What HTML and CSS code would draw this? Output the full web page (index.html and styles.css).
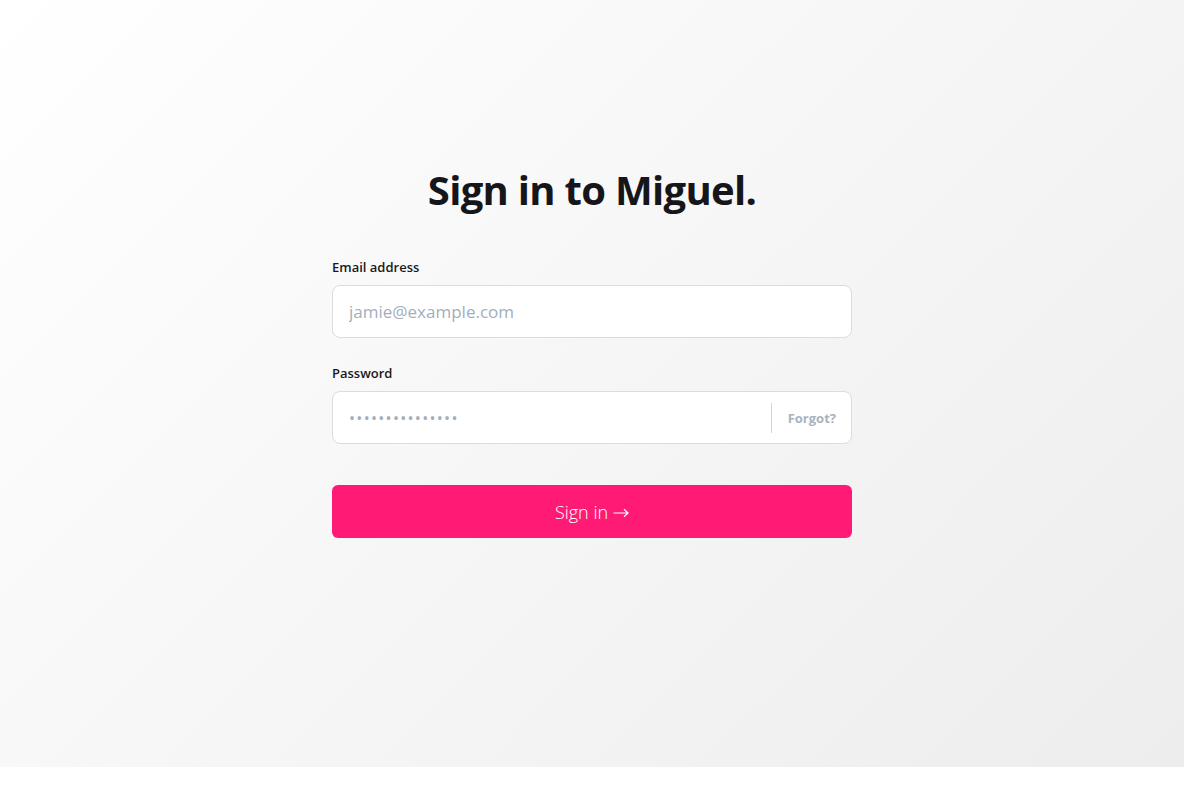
FILE: index.html
```html
<!DOCTYPE html>
<html lang="en">
<head>
<meta charset="utf-8">
<title>Sign in to Miguel.</title>
<link rel="stylesheet" href="styles.css">
</head>
<body>
<main class="page">
  <div class="card">
    <h1 class="title">Sign in to Miguel.</h1>
    <form class="form">
      <div class="field">
        <label class="label" for="email">Email address</label>
        <div class="input-wrap">
          <input class="input" id="email" type="email" placeholder="jamie@example.com">
        </div>
      </div>
      <div class="field">
        <label class="label" for="password">Password</label>
        <div class="input-wrap">
          <input class="input input-pass" id="password" type="password" placeholder="•••••••••••••••">
          <span class="divider"></span>
          <a class="forgot" href="#">Forgot?</a>
        </div>
      </div>
      <button class="submit" type="button">Sign in <svg class="arrow" width="16" height="10" viewBox="0 0 16 10" aria-hidden="true"><path d="M0.5 5H15M11 1.2L15 5L11 8.8" fill="none" stroke="#fff" stroke-width="1.2"/></svg></button>
    </form>
  </div>
</main>
</body>
</html>
```
FILE: styles.css
```css
* { box-sizing: border-box; }
html, body { margin: 0; padding: 0; background: #fff; }
body { font-family: "Open Sans", "Noto Sans", sans-serif; color: #111; }
.page {
  height: 767px;
  background: linear-gradient(135deg, #ffffff 0%, #ededed 100%);
  display: flex;
  justify-content: center;
  padding-top: 166px;
}
.card { width: 520px; }
.title {
  margin: 0 0 44px;
  text-align: center;
  font-size: 40px;
  line-height: 48px;
  font-weight: 700;
  color: #16161a;
  letter-spacing: -0.7px;
}
.form { display: flex; flex-direction: column; }
.field { display: flex; flex-direction: column; margin-bottom: 26px; }
.label {
  font-size: 13px;
  line-height: 18px;
  font-weight: 600;
  color: #1a1a1a;
  margin-bottom: 9px;
}
.input-wrap {
  display: flex;
  align-items: center;
  height: 53px;
  background: #fff;
  border: 1px solid #dcdcdc;
  border-radius: 8px;
}
.input {
  flex: 1;
  height: 100%;
  border: 0;
  outline: 0;
  background: transparent;
  padding: 0 16px;
  font-family: inherit;
  font-size: 17px;
  color: #333;
}
.input::placeholder { color: #a3aebd; }
.input-pass::placeholder { font-size: 16px; letter-spacing: 1.3px; color: #a4adba; }
.divider { width: 1px; height: 30px; background: #d4d4d4; }
.forgot {
  padding: 0 15px 0 16px;
  font-size: 13px;
  font-weight: 700;
  color: #a8b2c0;
  text-decoration: none;
}
.submit {
  margin-top: 15px;
  height: 53px;
  border: 0;
  border-radius: 6px;
  background: #ff1a75;
  color: #fff;
  font-family: inherit;
  font-size: 18px;
  font-weight: 300;
  cursor: pointer;
  display: flex;
  align-items: center;
  justify-content: center;
  gap: 5px;
}
.arrow { display: block; margin-top: 2px; }
```
